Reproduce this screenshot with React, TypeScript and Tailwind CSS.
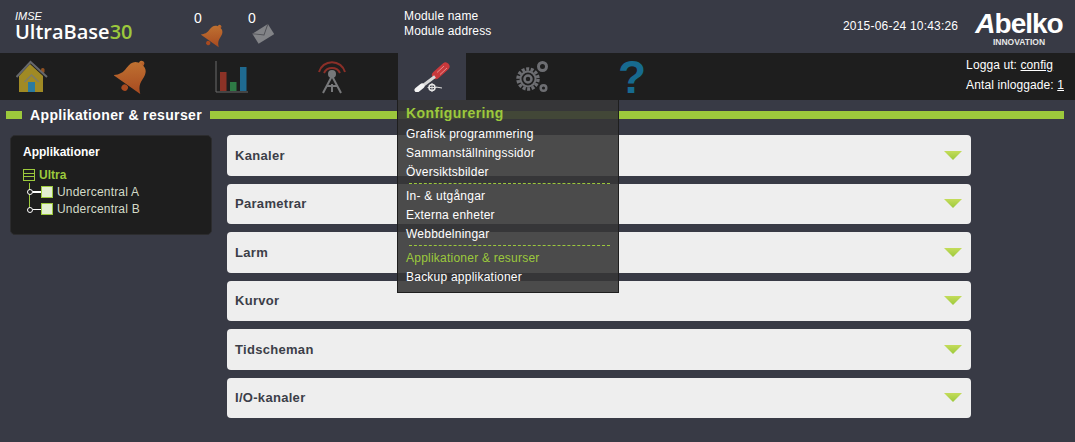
import { ReactNode } from "react";

const FONT = "font-['Liberation_Sans',Arial,sans-serif]";

function HomeIcon() {
  return (
    <svg width="32" height="34" viewBox="0 0 32 34">
      <rect x="25" y="8" width="3.5" height="5" rx="1.5" fill="#8f5122" />
      <path d="M3 16 14 4 27 16V32H3Z" fill="#a08a24" />
      <path d="M0.5 17 14.5 2 31 17" fill="none" stroke="#66686c" strokeWidth="2" />
      <path d="M8.5 22 15.5 15 23 22" fill="none" stroke="#7d7d6a" strokeWidth="1.5" />
      <rect x="12" y="22" width="7" height="10" fill="#2a7ba0" />
    </svg>
  );
}

function BellIcon({ size }: { size: number }) {
  return (
    <svg width={size} height={size} viewBox="0 0 34 34">
      <defs>
        <linearGradient id={`bell${size}`} x1="0" y1="0" x2="1" y2="1">
          <stop offset="0" stopColor="#c47a35" />
          <stop offset="1" stopColor="#a84a20" />
        </linearGradient>
      </defs>
      <g transform="rotate(35 17 17)" fill={`url(#bell${size})`}>
        <circle cx="17" cy="2.5" r="2.5" />
        <path d="M17 3c6.5 0 9 4 9 10.5 0 6 2 9 6 12.5H2c4-3.500 6-6.500 6-12.500C8 7 10.500 3 17 3Z" />
        <circle cx="17" cy="29.500" r="3" fill="#a84a20" />
      </g>
    </svg>
  );
}

function MailIcon() {
  return (
    <svg width="22" height="21" viewBox="0 0 24 22">
      <g transform="rotate(-32 12 11)">
        <rect x="2" y="5" width="20" height="13" fill="#828387" />
        <path d="M2 5 12 13 22 5" fill="none" stroke="#4f5056" strokeWidth="1" />
      </g>
    </svg>
  );
}

function ChartIcon() {
  return (
    <svg width="34" height="34" viewBox="0 0 34 34">
      <path d="M1 1V32H33" fill="none" stroke="#6a6a6a" strokeWidth="1" />
      <rect x="5" y="12" width="6.5" height="19" fill="#8c3226" />
      <rect x="15" y="22" width="6.5" height="9" fill="#2e7a45" />
      <rect x="25" y="7" width="6.5" height="24" fill="#1f6a90" />
    </svg>
  );
}

function AntennaIcon() {
  return (
    <svg width="30" height="34" viewBox="0 0 30 34">
      <path d="M2 12a13.500 13.500 0 0 1 26 0M7 13a9 9 0 0 1 16 0" fill="none" stroke="#8a2f28" strokeWidth="2" />
      <circle cx="15" cy="14" r="4" fill="#77787a" />
      <path d="M15 16 6 33M15 16 24 33M9 26H21M15 24V32" fill="none" stroke="#77787a" strokeWidth="2" />
    </svg>
  );
}

function ToolsIcon() {
  return (
    <svg width="36" height="30" viewBox="0 0 36 30">
      <path d="M31.500 4.500 22 13" stroke="#c9393c" strokeWidth="8" strokeLinecap="round" />
      <path d="M30 4 23 10.500M33 6 26 12.500" stroke="#e58a8a" strokeWidth="1" />
      <path d="M21 14.500 9 23.500" stroke="#d8d8d8" strokeWidth="3" />
      <path d="M8 24 3 28" stroke="#f4f4f4" strokeWidth="5" strokeLinecap="round" />
      <circle cx="18" cy="25.500" r="3" fill="none" stroke="#e8e8e8" strokeWidth="1.500" />
      <path d="M18 21V30M13.500 25.500H22.500M22 25 28 26" stroke="#e0e0e0" strokeWidth="1" />
    </svg>
  );
}

function GearsIcon() {
  return (
    <svg width="34" height="34" viewBox="0 0 34 34">
      <g fill="none" stroke="#6d6e72">
        <circle cx="13" cy="19" r="10" strokeWidth="3.500" strokeDasharray="3 1.500" />
        <circle cx="13" cy="19" r="7.500" strokeWidth="2" />
        <circle cx="13" cy="19" r="3.500" strokeWidth="2.500" />
        <circle cx="27.500" cy="6.500" r="4" strokeWidth="3" />
        <circle cx="28.500" cy="28" r="2.800" strokeWidth="2.500" />
      </g>
    </svg>
  );
}

function HelpGlyph() {
  return (
    <span className={`text-[46px] font-bold leading-none text-[#176a8f] ${FONT}`}>?</span>
  );
}

function AbelkoLogo() {
  return (
    <div className="flex w-[90px] flex-col items-center">
      <span className={`text-[28px] leading-[26px] font-bold tracking-[-1px] text-white ${FONT}`}>
        <i>A</i>belko
      </span>
      <span className={`text-[8.5px] leading-[10px] font-bold text-[#e6e6e6] ${FONT}`}>INNOVATION</span>
    </div>
  );
}

function NavItem({ active, children }: { active?: boolean; children: ReactNode }) {
  return (
    <div className="flex h-full w-[100px] shrink-0 justify-center">
      <div className={`flex h-full w-[68px] items-center justify-center ${active ? "bg-[#383a45]" : ""}`}>
        {children}
      </div>
    </div>
  );
}

function Panel({ title }: { title: string }) {
  return (
    <div className="flex h-[40.5px] items-center justify-between rounded-[4px] bg-[#eeeeee] pr-[9px] pl-2">
      <span className="text-[13px] font-bold tracking-[0.3px] text-[#3c3e48]">{title}</span>
      <svg width="18" height="9" viewBox="0 0 18 9">
        <defs>
          <linearGradient id={`arrow-${title}`} x1="0" y1="0" x2="0" y2="1">
            <stop offset="0" stopColor="#c4dc5a" />
            <stop offset="1" stopColor="#9cc93c" />
          </linearGradient>
        </defs>
        <path d="M0 0H18L9 9Z" fill={`url(#arrow-${title})`} />
      </svg>
    </div>
  );
}

function TreeChild({ label, last }: { label: string; last?: boolean }) {
  return (
    <div className="flex h-[17.5px] items-center">
      <div className="relative h-full w-[18px]">
        <div className={`absolute left-[6px] top-0 w-px bg-[#9cc93c] ${last ? "h-[9px]" : "h-full"}`} />
        <div className="absolute left-[4px] top-[6px] size-[6px] rounded-full border-[1.5px] border-white bg-[#1e1e1e]" />
        <div className="absolute left-[10px] top-[8px] h-[1.5px] w-[8px] bg-white" />
      </div>
      <div className="size-3 border border-[#9cc93c] bg-[#e3efd0]" />
      <span className="ml-[4px] text-[12px] tracking-[0.2px] text-[#d4dbc8]">{label}</span>
    </div>
  );
}

type MenuEntry = { label: string; active?: boolean; divider?: boolean };

const MENU: MenuEntry[] = [
  { label: "Grafisk programmering" },
  { label: "Sammanställningssidor" },
  { label: "Översiktsbilder", divider: true },
  { label: "In- & utgångar" },
  { label: "Externa enheter" },
  { label: "Webbdelningar", divider: true },
  { label: "Applikationer & resurser", active: true },
  { label: "Backup applikationer" },
];

function ConfigMenu() {
  return (
    <div className="absolute left-[397px] top-[100px] z-10 h-[193px] w-[222px] border border-t-0 border-[#1e1e1e] bg-[#363636e2] px-2 pt-[2px]">
      <div className="mb-[1px] text-[14px] leading-[22px] font-bold tracking-[0.4px] text-[#9cc93c]">Konfigurering</div>
      {MENU.map((m) => (
        <div key={m.label}>
          <div className={`text-[12px] leading-[19px] tracking-[0.23px] ${m.active ? "text-[#9cc93c]" : "text-white"}`}>{m.label}</div>
          {m.divider && <div className="mt-[1px] mb-[3px] ml-[3px] border-t border-dashed border-[#9cc93c]" />}
        </div>
      ))}
    </div>
  );
}

export default function App() {
  const panels = ["Kanaler", "Parametrar", "Larm", "Kurvor", "Tidscheman", "I/O-kanaler"];

  return (
    <div className={`relative h-[442px] w-[1075px] overflow-hidden bg-[#383a45] ${FONT}`}>
      {/* Top header */}
      <div className="flex h-[53px] text-white">
        <div className="w-[192px] pt-[11px] pl-[15px]">
          <div className="text-[11px] leading-[11px] italic">IMSE</div>
          <div className="font-['Open_Sans',sans-serif] text-[20px] leading-[20px] font-semibold">
            UltraBase<span className="text-[#9cc93c]">30</span>
          </div>
        </div>
        <div className="flex w-[212px] pt-[10px]">
          <div className="w-[54px]">
            <div className="w-[14px] pl-[2px] text-[14px] leading-[16px]">0</div>
            <div className="ml-[9px] -mt-[3px]"><BellIcon size={25} /></div>
          </div>
          <div>
            <div className="w-[14px] pl-[2px] text-[14px] leading-[16px]">0</div>
            <div className="ml-[6px] -mt-[3px]"><MailIcon /></div>
          </div>
        </div>
        <div className="w-[439px] pt-[9px] text-[12px] leading-[15px] tracking-[0.15px]">
          <div>Module name</div>
          <div>Module address</div>
        </div>
        <div className="w-[131px] pt-[19px] text-[12px] leading-[15px] tracking-[0.2px]">2015-06-24 10:43:26</div>
        <div className="pt-[11px]"><AbelkoLogo /></div>
      </div>

      {/* Main nav */}
      <div className="relative flex h-[47px] items-center bg-[#1e1e1e]">
        <div className="flex h-full -ml-[18px]">
          <NavItem><HomeIcon /></NavItem>
          <NavItem><BellIcon size={37} /></NavItem>
          <NavItem><ChartIcon /></NavItem>
          <NavItem><AntennaIcon /></NavItem>
          <NavItem active><ToolsIcon /></NavItem>
          <NavItem><GearsIcon /></NavItem>
          <NavItem><HelpGlyph /></NavItem>
        </div>
        <div className="ml-auto pr-[11px] pb-[4px] text-[12px] leading-[20px] tracking-[0.1px] text-white">
          <div>Logga ut: <span className="underline">config</span></div>
          <div>Antal inloggade: <span className="underline">1</span></div>
        </div>
      </div>

      {/* Section title */}
      <div className="mt-[5px] flex h-[20px] items-center pr-[11px] pl-[6px]">
        <div className="h-2 w-4 bg-[#9cc93c]" />
        <h1 className="mx-2 text-[14px] font-bold tracking-[0.36px] text-white">Applikationer &amp; resurser</h1>
        <div className="h-2 flex-1 bg-[#9cc93c]" />
      </div>

      {/* Content */}
      <div className="mt-[10px] flex items-start">
        <div className="ml-[10px] h-[100px] w-[202px] rounded-[5px] border border-[#2c2c2e] bg-[#1e1e1e] pt-[8px] pl-3">
          <div className="text-[12px] leading-[16px] font-bold text-white">Applikationer</div>
          <div className="mt-[7px] flex h-[16px] items-center">
            <div className="flex size-3 flex-col justify-evenly border border-[#9cc93c]">
              <div className="h-px bg-[#9cc93c]" />
              <div className="h-px bg-[#9cc93c]" />
            </div>
            <span className="ml-[4px] text-[12px] font-bold text-[#9cc93c]">Ultra</span>
          </div>
          <TreeChild label="Undercentral A" />
          <TreeChild label="Undercentral B" last />
        </div>
        <div className="ml-[15px] flex w-[744px] flex-col gap-2">
          {panels.map((p) => (
            <Panel key={p} title={p} />
          ))}
        </div>
      </div>

      <ConfigMenu />
    </div>
  );
}
